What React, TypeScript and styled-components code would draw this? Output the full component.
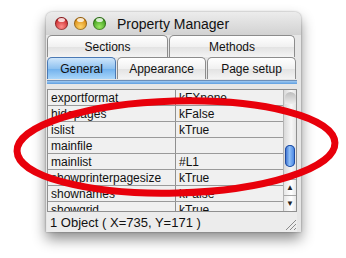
import React from "react"
import styled, { createGlobalStyle } from "styled-components"

const GlobalStyle = createGlobalStyle`
  html, body {
    margin: 0;
    padding: 0;
    background: #ffffff;
  }
`

const Page = styled.div`
  position: relative;
  width: 346px;
  height: 258px;
  overflow: hidden;
  padding: 12px 0 0 46px;
  box-sizing: border-box;
  font-family: "Liberation Sans", Arial, sans-serif;
  color: #111;
`

const Window = styled.div`
  width: 255px;
  height: 220px;
  display: flex;
  flex-direction: column;
  background: #e6e6e6;
  border-radius: 6px 6px 0 0;
  box-shadow: 0 7px 14px rgba(0, 0, 0, 0.45), 0 0 2px rgba(0, 0, 0, 0.4);
  overflow: hidden;
`

const TitleBar = styled.div`
  height: 23px;
  flex: none;
  display: flex;
  align-items: center;
  padding-left: 9px;
  gap: 6px;
  background: linear-gradient(#ececec, #d2d2d2);
`

const Light = styled.span<{ $c1: string; $c2: string }>`
  width: 13px;
  height: 13px;
  border-radius: 50%;
  background: radial-gradient(circle at 50% 75%, ${(p) => p.$c2}, ${(p) => p.$c1} 70%);
  box-shadow: inset 0 0 0 1px rgba(0, 0, 0, 0.35);
  position: relative;
  &::after {
    content: "";
    position: absolute;
    left: 3px;
    top: 1px;
    width: 7px;
    height: 4px;
    border-radius: 50%;
    background: rgba(255, 255, 255, 0.8);
  }
`

const Title = styled.div`
  margin-left: 5px;
  font-size: 14px;
  color: #111;
`

const TabRow = styled.div`
  display: flex;
  height: 22px;
  flex: none;
  padding-left: 1px;
  gap: 1px;
`

const Tab = styled.div<{ $w: number; $active?: boolean }>`
  width: ${(p) => p.$w}px;
  box-sizing: border-box;
  display: flex;
  align-items: center;
  justify-content: center;
  font-size: 12px;
  border: 1px solid #8c8c8c;
  border-bottom: none;
  border-radius: 5px 5px 0 0;
  background: ${(p) =>
    p.$active
      ? "linear-gradient(#cfe6fb, #8fc2f0 50%, #6fb0ec 51%, #a9d6fa)"
      : "linear-gradient(#ffffff, #f1f1f1 50%, #e2e2e2 51%, #f4f4f4)"};
  border-color: ${(p) => (p.$active ? "#4a79b4" : "#8c8c8c")};
`

const BlueLine = styled.div`
  height: 3px;
  margin: 1px 4px 0 1px;
  flex: none;
  background: linear-gradient(#9fc9f2, #5d9ee0);
  border-top: 1px solid #6d8fb8;
`

const Table = styled.div`
  margin: 5px 4px 0 1px;
  height: 121px;
  flex: none;
  display: flex;
  border: 1px solid #8f8f8f;
  border-bottom: none;
  background: #f0f0f0;
  overflow: hidden;
`

const Rows = styled.div`
  flex: 1;
  overflow: hidden;
`

const Row = styled.div`
  display: grid;
  grid-template-columns: 127px 1fr;
  height: 16px;
  border-bottom: 1px solid #9a9a9a;
  box-sizing: border-box;
  font-size: 12px;
  line-height: 16px;
`

const Cell = styled.div`
  padding-left: 3px;
  white-space: nowrap;
  overflow: hidden;
  & + & {
    border-left: 1px solid #8f8f8f;
  }
`

const Scrollbar = styled.div`
  width: 12px;
  flex: none;
  border-left: 1px solid #b4b4b4;
  background: linear-gradient(90deg, #d9d9d9, #f7f7f7 60%, #e4e4e4);
  display: flex;
  flex-direction: column;
  align-items: center;
`

const TrackCap = styled.div`
  width: 11px;
  height: 12px;
  margin-top: 2px;
  border-radius: 6px 6px 0 0;
  background: linear-gradient(#bdbdbd, #ededed);
`

const Thumb = styled.div`
  width: 10px;
  height: 22px;
  margin-top: 41px;
  border-radius: 5px;
  background: linear-gradient(90deg, #2f64c8, #8fc0f8 45%, #3d7be0);
  box-shadow: inset 0 0 0 1px #1f4b9e;
`

const ArrowBtn = styled.div`
  width: 12px;
  height: 15px;
  border-top: 1px solid #a8a8a8;
  display: flex;
  align-items: center;
  justify-content: center;
  font-size: 8px;
  color: #222;
  background: linear-gradient(90deg, #e6e6e6, #ffffff 60%, #e8e8e8);
`

const Spacer = styled.div`
  flex: 1;
`

const StatusBar = styled.div`
  flex: 1;
  margin: 0 4px 0 1px;
  border-top: 1px solid #8f8f8f;
  display: flex;
  align-items: center;
  justify-content: space-between;
  padding-left: 3px;
  font-size: 13px;
  background: #ececec;
`

const Grip = styled.svg`
  align-self: flex-end;
  margin: 0 0 1px 0;
`

const Mark = styled.svg`
  position: absolute;
  left: 0;
  top: 0;
  pointer-events: none;
`

const rows: [string, string][] = [
  ["exportformat", "kFXnone"],
  ["hidepages", "kFalse"],
  ["islist", "kTrue"],
  ["mainfile", ""],
  ["mainlist", "#L1"],
  ["showprinterpagesize", "kTrue"],
  ["shownames", "kFalse"],
  ["showgrid", "kTrue"],
]

export default function App() {
  return (
    <Page>
      <GlobalStyle />
      <Window>
        <TitleBar>
          <Light $c1="#c8262a" $c2="#ff8d8a" />
          <Light $c1="#d98a12" $c2="#ffd46a" />
          <Light $c1="#3c9a1c" $c2="#9be862" />
          <Title>Property Manager</Title>
        </TitleBar>
        <TabRow>
          <Tab $w={121}>Sections</Tab>
          <Tab $w={126}>Methods</Tab>
        </TabRow>
        <TabRow>
          <Tab $w={69} $active>
            General
          </Tab>
          <Tab $w={89}>Appearance</Tab>
          <Tab $w={89}>Page setup</Tab>
        </TabRow>
        <BlueLine />
        <Table>
          <Rows>
            {rows.map(([k, v]) => (
              <Row key={k}>
                <Cell>{k}</Cell>
                <Cell>{v}</Cell>
              </Row>
            ))}
          </Rows>
          <Scrollbar>
            <TrackCap />
            <Thumb />
            <Spacer />
            <ArrowBtn>▲</ArrowBtn>
            <ArrowBtn>▼</ArrowBtn>
          </Scrollbar>
        </Table>
        <StatusBar>
          <span>1 Object ( X=735, Y=171 )</span>
          <Grip width="14" height="14" viewBox="0 0 14 14">
            <path d="M3 13 L13 3 M7 13 L13 7 M11 13 L13 11" stroke="#8a8a8a" strokeWidth="1" />
          </Grip>
        </StatusBar>
      </Window>
      <Mark width="346" height="258" viewBox="0 0 346 258">
        <ellipse
          cx="176"
          cy="147"
          rx="159"
          ry="46"
          fill="none"
          stroke="#e8000b"
          strokeWidth="7"
          transform="rotate(-1.5 176 147)"
        />
      </Mark>
    </Page>
  )
}
